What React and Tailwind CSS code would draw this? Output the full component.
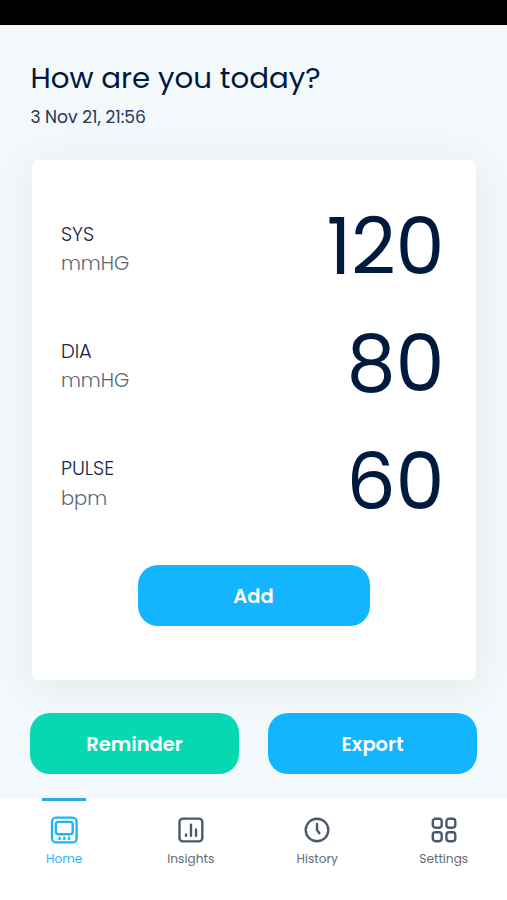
// App.jsx
import React, { useState } from 'react';

const HomeIcon = () => (
  <svg className="w-7 h-7" viewBox="0 0 28 28" fill="none" stroke="currentColor" strokeWidth="2.4" strokeLinecap="round">
    <rect x="2" y="1.6" width="24.6" height="24.8" rx="4" />
    <rect x="5.9" y="5.9" width="16.8" height="12.3" rx="2.5" />
    <path d="M9.6 21.6v1.4M14.3 21.6v1.4M19 21.6v1.4" />
  </svg>
);

const InsightsIcon = () => (
  <svg className="w-7 h-7" viewBox="0 0 28 28" fill="none" stroke="currentColor" strokeWidth="2.4" strokeLinecap="round">
    <rect x="2.5" y="2.6" width="22.8" height="22.8" rx="3.4" />
    <path d="M9 18.4v1.4M14 8.8v11M19 13.4v6.4" />
  </svg>
);

const HistoryIcon = () => (
  <svg className="w-7 h-7" viewBox="0 0 28 28" fill="none" stroke="currentColor" strokeWidth="2.4" strokeLinecap="round" strokeLinejoin="round">
    <circle cx="14" cy="14" r="11.3" />
    <path d="M14 8v6l2.4 3.2" />
  </svg>
);

const SettingsIcon = () => (
  <svg className="w-7 h-7" viewBox="0 0 28 28" fill="none" stroke="currentColor" strokeWidth="2.4">
    <rect x="2.8" y="2.8" width="8.9" height="8.9" rx="2.6" />
    <rect x="16.4" y="2.8" width="8.9" height="8.9" rx="2.6" />
    <rect x="2.8" y="16.3" width="8.9" height="8.9" rx="2.6" />
    <rect x="16.4" y="16.3" width="8.9" height="8.9" rx="2.6" />
  </svg>
);

const App = () => {
  const [activeTab, setActiveTab] = useState('home');

  const readings = [
    { id: 'sys', label: 'SYS', unit: 'mmHG', value: 120 },
    { id: 'dia', label: 'DIA', unit: 'mmHG', value: 80 },
    { id: 'pulse', label: 'PULSE', unit: 'bpm', value: 60 }
  ];

  const tabs = [
    { id: 'home', label: 'Home', icon: HomeIcon },
    { id: 'insights', label: 'Insights', icon: InsightsIcon },
    { id: 'history', label: 'History', icon: HistoryIcon },
    { id: 'settings', label: 'Settings', icon: SettingsIcon }
  ];

  return (
    <div className="flex flex-col w-full h-[900px] overflow-hidden bg-[#f3f8fb] text-[#001a3d] font-['Poppins','Inter',sans-serif]">
      {/* Status bar */}
      <div className="h-[25px] shrink-0 bg-black" />

      <main className="flex flex-col grow px-[30px]">
        <header className="pt-[32px] pl-[0.4px] h-[135px]">
          <h1 className="text-[29.3px] leading-[42px] font-normal whitespace-nowrap">How are you today?</h1>
          <p className="mt-[8px] text-[17.1px] leading-5 text-[#26375a] whitespace-nowrap">3 Nov 21, 21:56</p>
        </header>

        {/* Readings card */}
        <section className="flex flex-col h-[520px] mx-[1.5px] pt-[30px] px-[29px] bg-white rounded-[7px] shadow-[0_6px_44px_rgba(0,0,0,0.07)]">
          {readings.map((reading) => (
            <div key={reading.id} className="flex items-center justify-between h-[117.3px]">
              <div className="pt-[0.6px] pl-[0.4px] text-[19.5px] leading-[29.3px] font-light whitespace-nowrap">
                <div className="text-[#16264b]">{reading.label}</div>
                <div className="text-[#5c6673]">{reading.unit}</div>
              </div>
              <div className="text-[78px] leading-none font-normal tracking-[-0.4px] pr-[2.5px] pb-[3px]">{reading.value}</div>
            </div>
          ))}
          <button className="self-center mt-[23.5px] w-[232px] h-[61px] pt-[2px] rounded-[20px] bg-[#13b5ff] text-white text-[19.5px] font-semibold">
            Add
          </button>
        </section>

        <div className="flex gap-[29px] mt-[33px]">
          <button className="flex-1 h-[61px] pt-[2px] rounded-[20px] bg-[#06d9b2] text-white text-[19.5px] font-semibold">Reminder</button>
          <button className="flex-1 h-[61px] pt-[2px] rounded-[20px] bg-[#13b5ff] text-white text-[19.5px] font-semibold">Export</button>
        </div>
      </main>

      {/* Bottom navigation */}
      <nav className="flex h-[102px] shrink-0 bg-white">
        {tabs.map((tab) => {
          const Icon = tab.icon;
          const isActive = activeTab === tab.id;
          return (
            <button
              key={tab.id}
              onClick={() => setActiveTab(tab.id)}
              className={`flex-1 flex flex-col items-center ${isActive ? 'pl-px text-[#1fb4f5]' : 'text-[#4d586c]'}`}
            >
              <span className={`w-11 h-[3px] ${isActive ? 'bg-[#25abe8]' : 'bg-transparent'}`} />
              <span className="mt-[15px]"><Icon /></span>
              <span className={`mt-[6px] text-[12.2px] leading-[18px] ${isActive ? '' : 'text-[#606b75]'}`}>{tab.label}</span>
            </button>
          );
        })}
      </nav>
    </div>
  );
};

export default App;
